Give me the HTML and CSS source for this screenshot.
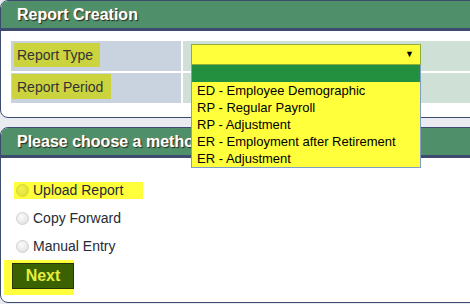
FILE: index.html
```html
<!DOCTYPE html>
<html lang="en">
<head>
    <meta charset="UTF-8">
    <title>Report Creation</title>
    <link rel="stylesheet" href="styles.css">
</head>
<body>
    <div class="panel">
        <div class="panel-head">Report Creation</div>
        <div class="panel-body">
            <div class="form-grid">
                <div class="label-cell"><span class="mark">Report Type</span></div>
                <div class="value-cell">
                    <div class="select-wrap">
                        <div class="select-box"><span class="arrow">&#9660;</span></div>
                        <ul class="options">
                            <li class="picked"></li>
                            <li>ED - Employee Demographic</li>
                            <li>RP - Regular Payroll</li>
                            <li>RP - Adjustment</li>
                            <li>ER - Employment after Retirement</li>
                            <li>ER - Adjustment</li>
                        </ul>
                    </div>
                </div>
                <div class="label-cell"><span class="mark period">Report Period</span></div>
                <div class="value-cell"></div>
            </div>
        </div>
    </div>

    <div class="panel">
        <div class="panel-head">Please choose a method:</div>
        <div class="panel-body methods">
            <div class="method"><span class="hl"><span class="radio"></span>Upload Report</span></div>
            <div class="method"><span class="radio"></span>Copy Forward</div>
            <div class="method"><span class="radio"></span>Manual Entry</div>
            <div class="next-wrap"><button class="next-button">Next</button></div>
        </div>
    </div>
</body>
</html>
```

FILE: styles.css
```css
body {
    margin: 0;
    background-color: #e9ebf1;
    font-family: "Liberation Sans", Arial, sans-serif;
    font-size: 14px;
    color: #2a2a2a;
    overflow: hidden;
    width: 470px;
    height: 304px;
}
.panel {
    width: 490px;
    background-color: #ffffff;
    border: 1px solid #3c4b6e;
    border-radius: 8px;
    margin-bottom: 9px;
}
.panel-head {
    height: 27px;
    line-height: 28px;
    padding-left: 16px;
    background-color: #4f8f6a;
    border-bottom: 3px solid #3c4b6e;
    border-radius: 7px 7px 0 0;
    color: #ffffff;
    font-weight: bold;
    font-size: 16px;
    text-shadow: 1px 1px 1px #1e2a22, 0 0 1px #c9a34a;
}
.panel-body {
    padding: 10px 0 14px 10px;
}
.form-grid {
    display: grid;
    grid-template-columns: 170px 1fr;
    grid-template-rows: 30px 30px;
    column-gap: 2px;
    row-gap: 2px;
}
.label-cell {
    background-color: #c9d3df;
    padding: 2px 0 0 3px;
}
.label-cell .mark {
    display: inline-block;
    background-color: #cbd43e;
    padding: 4px 7px 4px 3px;
    line-height: 16px;
    color: #333333;
}
.label-cell .mark.period {
    margin-left: -2px;
    padding: 5px 8px 4px 5px;
    margin-top: -1px;
}
.value-cell {
    background-color: #cfe0d6;
    padding: 3px 8px;
}
.select-wrap {
    position: relative;
    width: 230px;
    z-index: 5;
}
.select-box {
    height: 19px;
    background-color: #ffff3c;
    border: 1px solid #8fae3a;
    position: relative;
}
.arrow {
    position: absolute;
    right: 6px;
    top: 4px;
    font-size: 9px;
    color: #000000;
}
.options {
    position: absolute;
    top: 21px;
    left: 0;
    width: 228px;
    margin: 0;
    padding: 0;
    list-style: none;
    background-color: #ffff3c;
    border: 1px solid #7f9dc6;
    border-top: none;
}
.options li {
    height: 17px;
    line-height: 18px;
    padding-left: 5px;
    font-size: 13px;
    color: #000000;
    white-space: nowrap;
}
.options li.picked {
    background-color: #22903f;
}
.methods {
    padding: 18px 0 7px 13px;
}
.method {
    height: 28px;
    display: flex;
    align-items: center;
    padding-left: 2px;
    color: #262a36;
}
.method .hl {
    display: flex;
    align-items: center;
    background-color: #ffff3c;
    height: 17px;
    margin-left: -2px;
    padding: 0 20px 0 2px;
}
.radio {
    display: inline-block;
    width: 11px;
    height: 11px;
    border-radius: 50%;
    border: 1px solid #cfcfcf;
    background: radial-gradient(circle at 40% 35%, #fbfbfb, #dcdcdc);
    margin-right: 4px;
}
.hl .radio {
    border-color: #d6d63a;
    background: radial-gradient(circle at 40% 35%, #f2f24a, #dcdc3a);
}
.next-wrap {
    display: inline-block;
    margin-left: -10px;
    background-color: #ffff3c;
    padding: 3px 0 6px 8px;
}
.next-button {
    display: block;
    width: 62px;
    height: 26px;
    background-color: #3a6200;
    border: 1px solid #22360a;
    color: #e4ef3c;
    font-family: "Liberation Sans", Arial, sans-serif;
    font-size: 16px;
    font-weight: bold;
    padding: 0;
    cursor: pointer;
}
```
